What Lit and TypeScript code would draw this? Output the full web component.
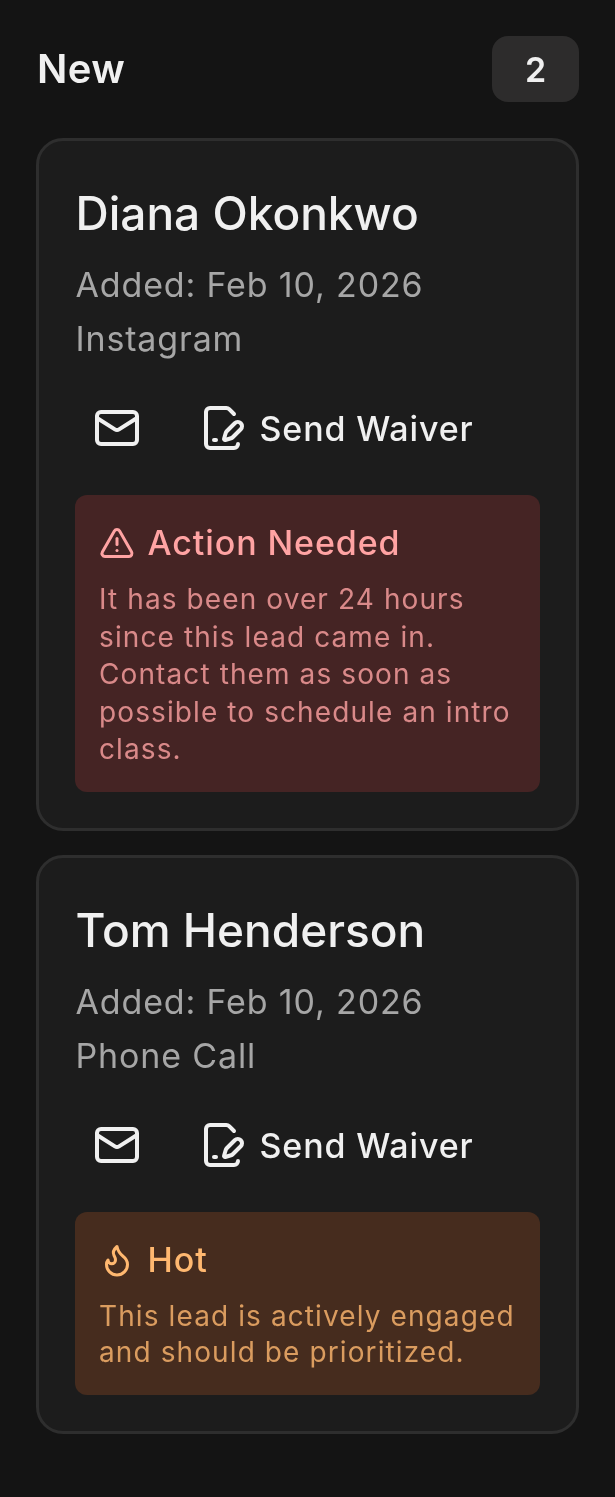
import { LitElement, html, css } from "lit";
import { customElement } from "lit/decorators.js";

const svg24 = (cls: string, body: unknown) => html`<svg class=${cls} viewBox="0 0 24 24" fill="none" stroke="currentColor" stroke-width="2" stroke-linecap="round" stroke-linejoin="round">${body}</svg>`;
const mail = svg24("ic-lg", html`<svg x="0" y="0" width="24" height="24" viewBox="0 0 24 24"><rect x="2" y="4" width="20" height="16" rx="2"/><path d="m22 7-8.97 5.7a1.94 1.94 0 0 1-2.06 0L2 7"/></svg>`);
const waiver = svg24("ic-lg", html`<svg x="0" y="0" width="24" height="24" viewBox="0 0 24 24"><path d="m18 5-2.414-2.414A2 2 0 0 0 14.172 2H6a2 2 0 0 0-2 2v16a2 2 0 0 0 2 2h12a2 2 0 0 0 2-2"/><path d="M21.378 12.626a1 1 0 0 0-3.004-3.004l-4.01 4.012a2 2 0 0 0-.506.854l-.837 2.87a.5.5 0 0 0 .62.62l2.87-.837a2 2 0 0 0 .854-.506z"/><path d="M8 18h1"/></svg>`);
const alert = svg24("ic-sm", html`<svg x="0" y="0" width="24" height="24" viewBox="0 0 24 24"><path d="m21.73 18-8-14a2 2 0 0 0-3.48 0l-8 14A2 2 0 0 0 4 21h16a2 2 0 0 0 1.73-3"/><path d="M12 9v4"/><path d="M12 17h.01"/></svg>`);
const flame = svg24("ic-sm", html`<svg x="0" y="0" width="24" height="24" viewBox="0 0 24 24"><path d="M8.5 14.5A2.5 2.5 0 0 0 11 12c0-1.38-.5-2-1-3-1.072-2.143-.224-4.054 2-6 .5 2.5 2 4.9 4 6.5 2 1.6 3 3.5 3 5.5a7 7 0 1 1-14 0c0-1.153.433-2.294 1-3a2.5 2.5 0 0 0 2.5 2.5z"/></svg>`);

@customElement("app-root")
export class AppRoot extends LitElement {
  static styles = css`
    :host { display: block; min-height: 1497px; background: #141414; font-family: Inter, "Liberation Sans", sans-serif; color: #f0f0f0; box-sizing: border-box; padding: 36px 36px 0 36px; }
    .head { display: flex; justify-content: space-between; align-items: center; height: 66px; margin-bottom: 36px; padding-left: 1px; will-change: transform; }
    h2 { margin: 0; font-size: 40px; font-weight: 600; line-height: 66px; letter-spacing: 0.4px; color: #f0f0f0; }
    .count { width: 87px; height: 66px; border-radius: 16px; background: #2d2c2c; display: flex; align-items: center; justify-content: center; font-size: 34px; font-weight: 600; }
    .card { box-sizing: border-box; border: 3px solid #2e2e2e; border-radius: 27px; background: #1c1c1c; padding: 36px; margin-bottom: 23.500px; will-change: transform; }
    .name { margin: -2px 0 0; padding-left: 0.500px; font-size: 46px; font-weight: 500; line-height: 76px; }
    .meta { padding-left: 0.500px; font-size: 34px; line-height: 54px; color: #a6a6a6; letter-spacing: 0.85px; }
    .meta.first { margin-top: 7px; }
    .actions { display: flex; align-items: center; height: 72px; margin: 26px 0 31px; padding-left: 18px; }
    .ic-lg { width: 48px; height: 48px; display: block; flex: none; }
    .ic-sm { width: 36px; height: 36px; display: block; flex: none; }
    .waiver { display: flex; align-items: center; margin-left: 57px; font-size: 34px; font-weight: 500; letter-spacing: 0.85px; gap: 13.500px; }
    .box { border-radius: 12px; padding: 25px 24px 23.500px; }
    .box.red { background: #452424; color: #ffa3a3; }
    .box.orange { background: #462c1e; color: #ffb870; padding-bottom: 24.500px; }
    .title { display: flex; align-items: center; gap: 12.500px; font-size: 34px; font-weight: 500; line-height: 46px; letter-spacing: 0.9px; }
    .text { font-size: 28px; line-height: 37.500px; letter-spacing: 1.1px; margin-top: 15px; opacity: .8; }
    .orange .text { line-height: 36px; }
  `;

  private card(name: string, source: string, box: unknown) {
    return html`<div class="card">
      <h3 class="name">${name}</h3>
      <div class="meta first">Added: Feb 10, 2026</div>
      <div class="meta">${source}</div>
      <div class="actions">${mail}<div class="waiver">${waiver}<span>Send Waiver</span></div></div>
      ${box}
    </div>`;
  }

  render() {
    return html`
      <div class="head"><h2>New</h2><div class="count">2</div></div>
      ${this.card("Diana Okonkwo", "Instagram", html`<div class="box red"><div class="title">${alert}<span>Action Needed</span></div><div class="text">It has been over 24 hours since this lead came in. Contact them as soon as possible to schedule an intro class.</div></div>`)}
      ${this.card("Tom Henderson", "Phone Call", html`<div class="box orange"><div class="title">${flame}<span>Hot</span></div><div class="text">This lead is actively engaged and should be prioritized.</div></div>`)}
    `;
  }
}
